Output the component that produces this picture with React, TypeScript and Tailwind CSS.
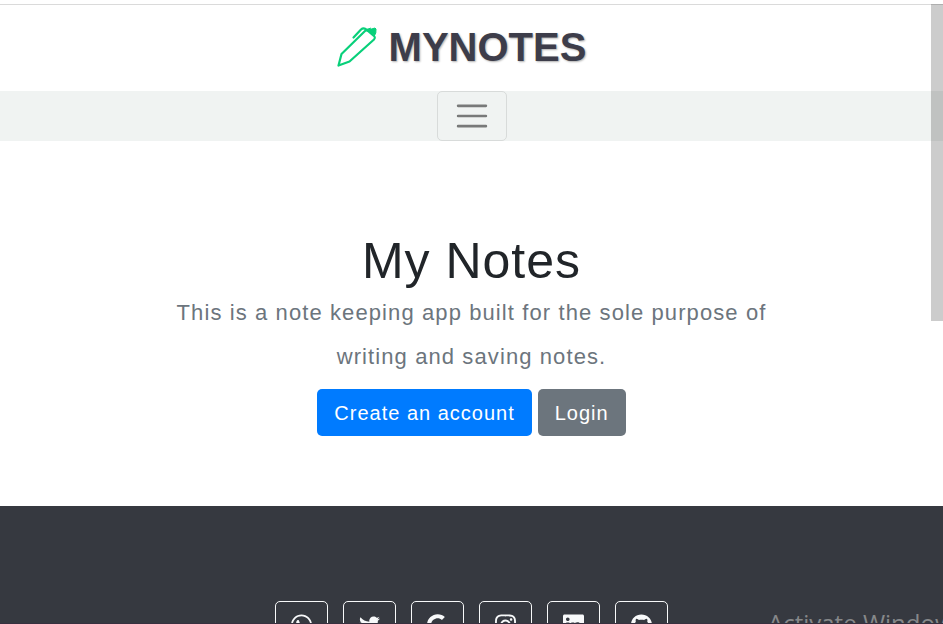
import { FaGithub, FaGoogle, FaInstagram, FaLinkedin, FaTwitter, FaWhatsapp } from "react-icons/fa";
import type { IconType } from "react-icons";

const socials: { name: string; Icon: IconType }[] = [
  { name: "WhatsApp", Icon: FaWhatsapp },
  { name: "Twitter", Icon: FaTwitter },
  { name: "Google", Icon: FaGoogle },
  { name: "Instagram", Icon: FaInstagram },
  { name: "LinkedIn", Icon: FaLinkedin },
  { name: "GitHub", Icon: FaGithub },
];

function PenIcon() {
  return (
    <svg className="h-10 w-10" viewBox="0 0 40 40" fill="none" stroke="#08d07a" strokeWidth="2.200" strokeLinejoin="round" strokeLinecap="round" aria-hidden="true">
      <path d="M1.500 38.500 L4.500 27 L28 4 Q29.500 2.500 31 4 L37.500 9.500 Q38.500 11 37 12.500 L12.500 34.500 Z" />
      <path d="M16.500 10.500 L24 2.500 Q25.500 1.200 27.500 1.500 L31 3.500" />
      <path d="M29.500 2.500 L33.500 1.200 L34.500 2 L38 1 L39 2 L38.800 6 L37.500 8.500 Z" fill="#08d07a" strokeWidth="1" />
    </svg>
  );
}

function Header() {
  return (
    <header>
      <div className="flex justify-center border-t border-[#dadada] pt-[18px] pr-5 pb-[20px]">
        <a href="#home" className="flex items-center gap-3">
          <PenIcon />
          <span className="text-[40px] leading-[48px] font-bold text-[#3d3d4a] [text-shadow:1px_1px_2px_#b0b0b0]">MYNOTES</span>
        </a>
      </div>
      <nav className="flex justify-center bg-[#f0f3f2]">
        <button type="button" aria-label="Toggle navigation" className="flex h-[50px] w-[70px] items-center justify-center rounded-[5px] border border-[#d8dbda]">
          <svg className="h-[38px] w-[38px]" viewBox="0 0 30 30" stroke="rgba(0,0,0,0.5)" strokeWidth="2" strokeLinecap="round" strokeMiterlimit="10" aria-hidden="true">
            <path d="M4 7h22M4 15h22M4 23h22" />
          </svg>
        </button>
      </nav>
    </header>
  );
}

function Hero() {
  return (
    <main className="px-8 pt-[90px] pb-[70px] text-center">
      <h1 className="text-[50px] leading-[60px] tracking-[1px] text-[#212529]">My Notes</h1>
      <p className="mx-auto max-w-[640px] text-[22px] leading-[44px] tracking-wider text-[#6c757d]">
        This is a note keeping app built for the sole purpose of writing and saving notes.
      </p>
      <div className="mt-[10px] flex justify-center gap-[6px] text-[20px] leading-[31px] tracking-wider text-white">
        <a href="#register" className="rounded-[5px] bg-[#007bff] px-[17px] pt-[9px] pb-[7px]">Create an account</a>
        <a href="#login" className="rounded-[5px] bg-[#6c757d] px-[17px] pt-[9px] pb-[7px]">Login</a>
      </div>
    </main>
  );
}

export default function App() {
  return (
    <div className="relative flex h-screen flex-col overflow-hidden bg-white pt-1 font-['Liberation_Sans',Arial,sans-serif]">
      <Header />
      <Hero />
      <footer className="flex grow items-start justify-center gap-[15px] bg-[#363940] pt-[95px]">
        {socials.map(({ name, Icon }) => (
          <a key={name} href={`#${name.toLowerCase()}`} aria-label={name} className="flex h-[48px] w-[53px] shrink-0 items-center justify-center rounded-[5px] border border-[#f8f9fa] text-[#f8f9fa]">
            <Icon className="h-6 w-[21px]" />
          </a>
        ))}
      </footer>
      <div className="absolute top-1 right-0 h-[317px] w-3 bg-black/20" />
      <div className="absolute top-[606px] left-[768px] text-[24px] leading-[34px] whitespace-nowrap text-[#86888a] font-['Open_Sans','Noto_Sans',sans-serif]">Activate Windows</div>
      <div className="absolute bottom-0 left-0 h-px w-full bg-[#37303f]" />
    </div>
  );
}
